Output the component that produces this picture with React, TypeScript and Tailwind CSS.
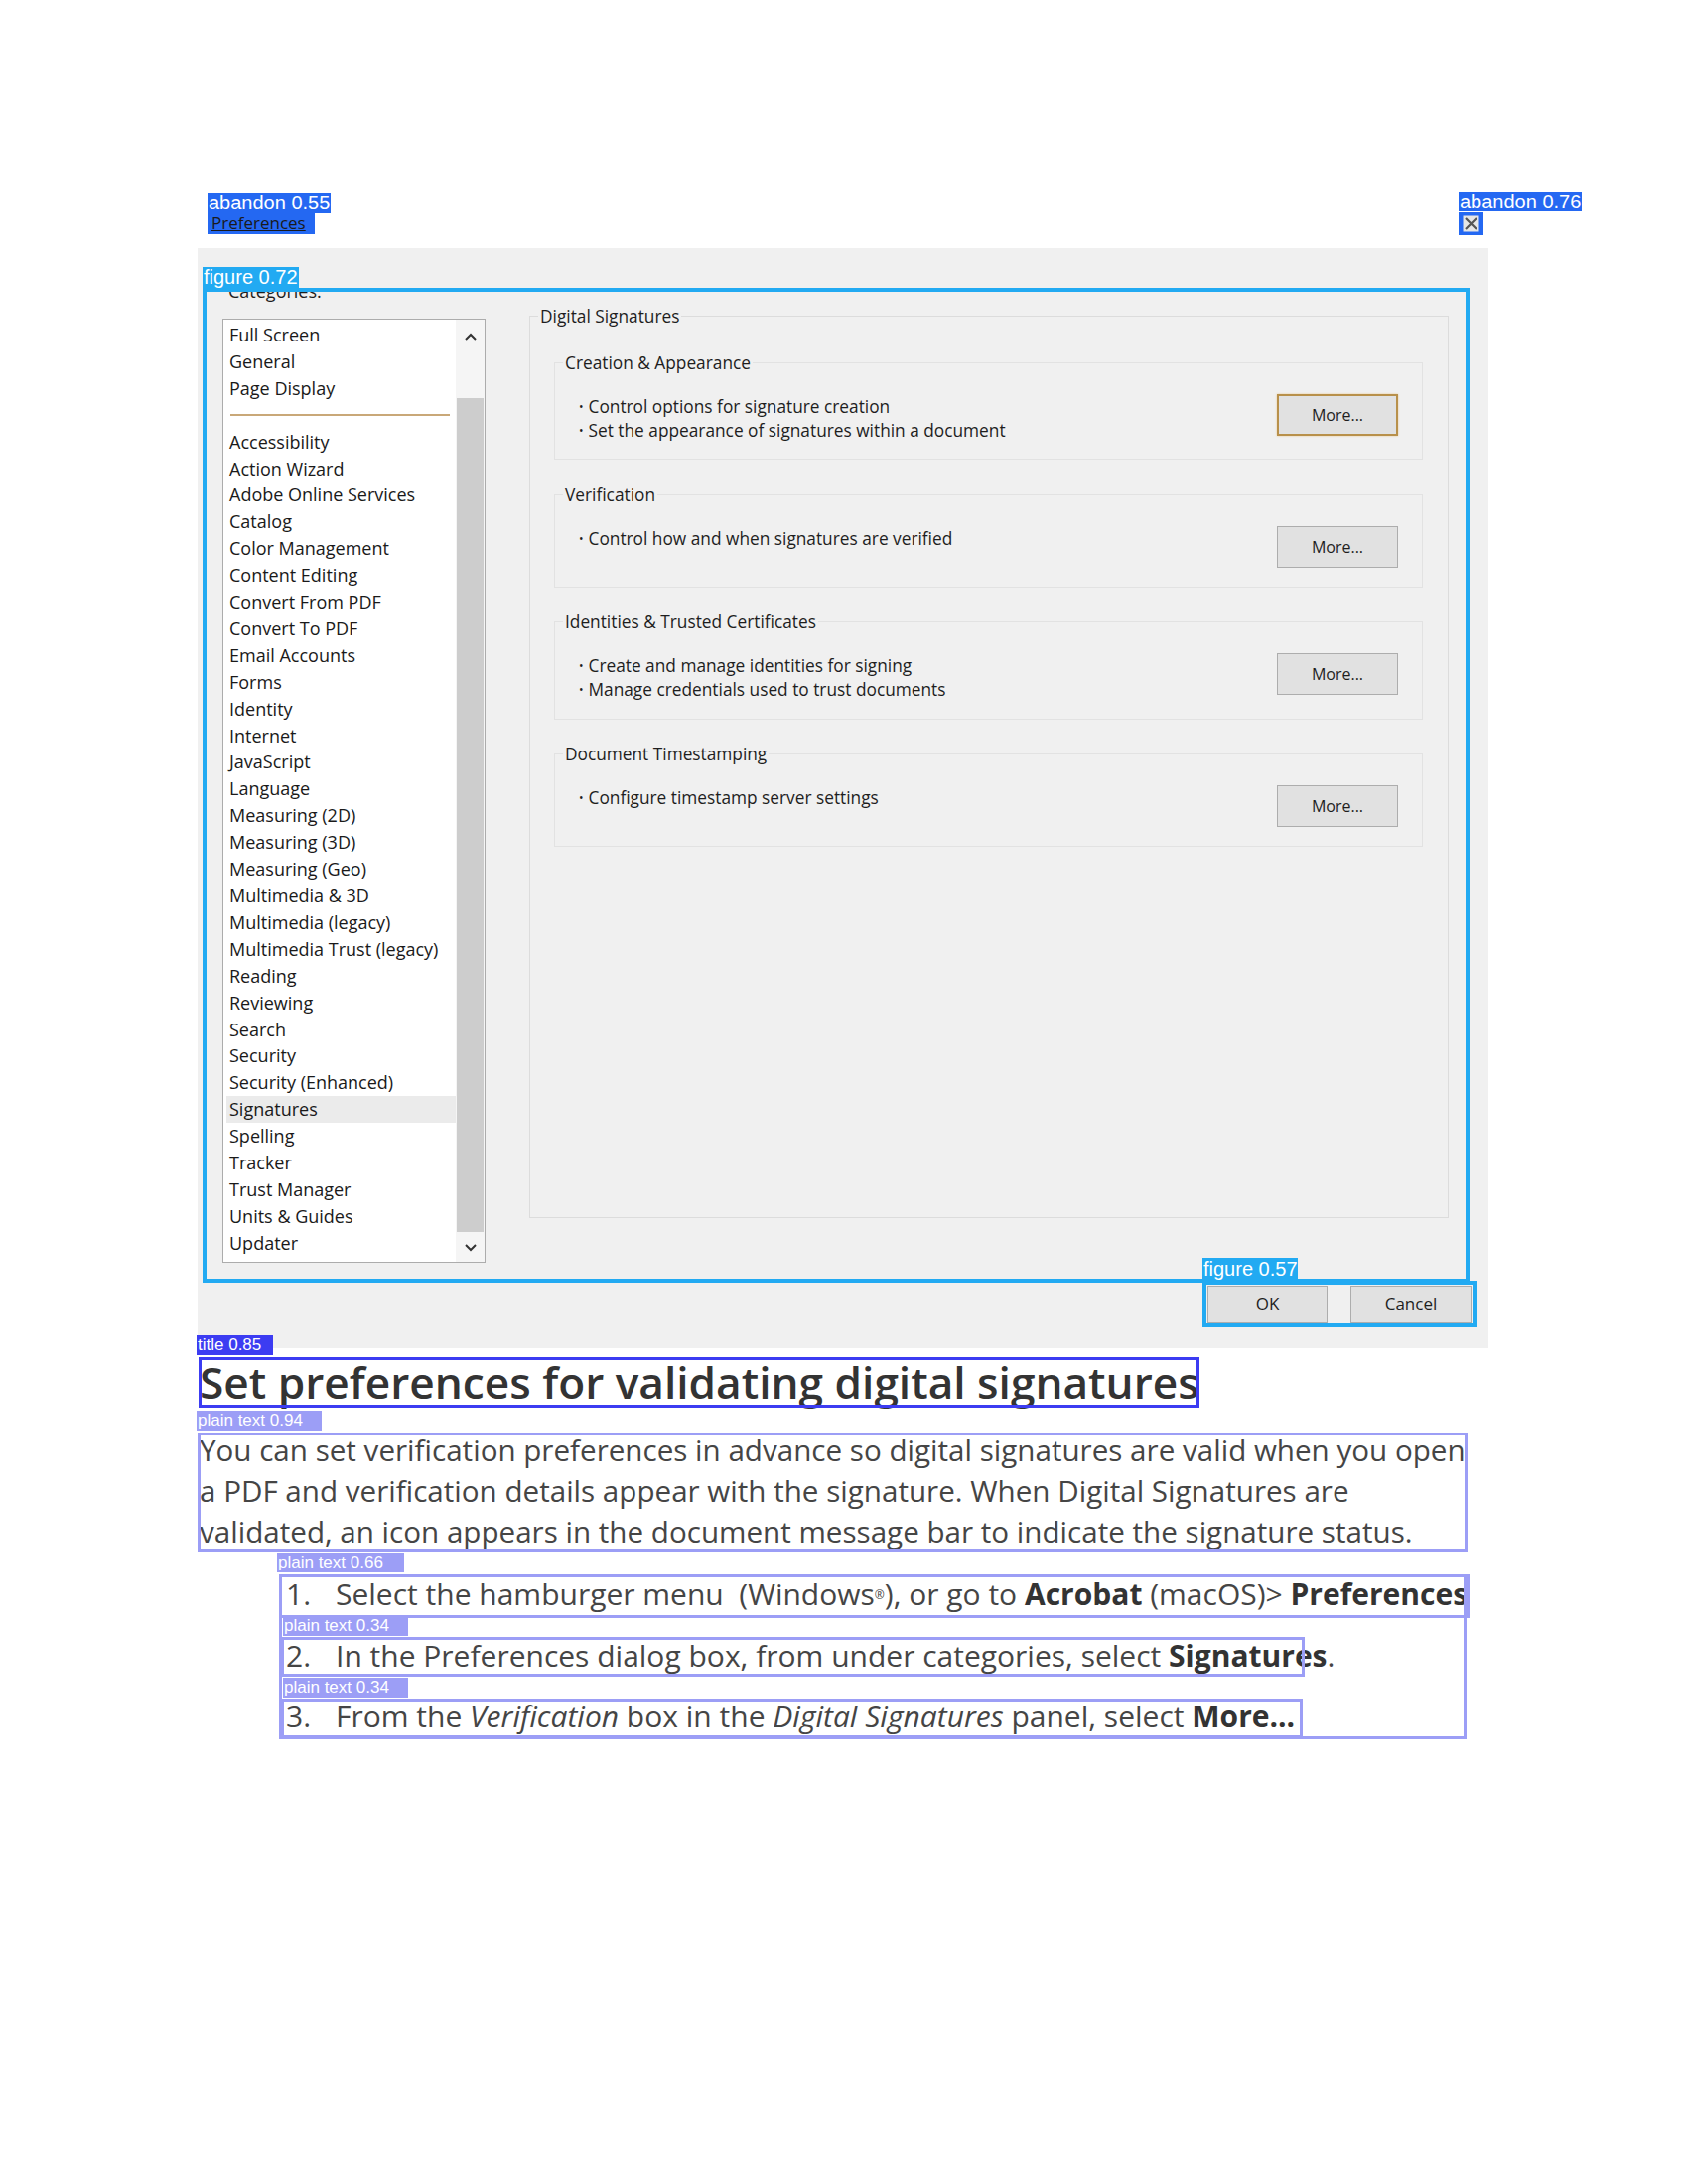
import React from "react";

const topCats = ["Full Screen", "General", "Page Display"];
const cats = [
  "Accessibility",
  "Action Wizard",
  "Adobe Online Services",
  "Catalog",
  "Color Management",
  "Content Editing",
  "Convert From PDF",
  "Convert To PDF",
  "Email Accounts",
  "Forms",
  "Identity",
  "Internet",
  "JavaScript",
  "Language",
  "Measuring (2D)",
  "Measuring (3D)",
  "Measuring (Geo)",
  "Multimedia & 3D",
  "Multimedia (legacy)",
  "Multimedia Trust (legacy)",
  "Reading",
  "Reviewing",
  "Search",
  "Security",
  "Security (Enhanced)",
  "Signatures",
  "Spelling",
  "Tracker",
  "Trust Manager",
  "Units & Guides",
  "Updater",
];

const groups = [
  { title: "Creation & Appearance", lines: ["Control options for signature creation", "Set the appearance of signatures within a document"], h: "h-[98px] mt-[46px]", focus: true },
  { title: "Verification", lines: ["Control how and when signatures are verified"], h: "h-[94px] mt-[35px]", focus: false },
  { title: "Identities & Trusted Certificates", lines: ["Create and manage identities for signing", "Manage credentials used to trust documents"], h: "h-[99px] mt-[34px]", focus: false },
  { title: "Document Timestamping", lines: ["Configure timestamp server settings"], h: "h-[94px] mt-[34px]", focus: false },
];

function Chevron({ down }: { down?: boolean }) {
  return (
    <svg width="14" height="9" viewBox="0 0 14 9">
      <path d={down ? "M2 2 L7 7 L12 2" : "M2 7 L7 2 L12 7"} fill="none" stroke="#333" strokeWidth="2" />
    </svg>
  );
}

function Group({ g }: { g: (typeof groups)[number] }) {
  return (
    <div className={"relative w-[875px] border border-[#e2e2e2] " + g.h}>
      <span className="absolute left-[8px] -top-[12px] bg-[#f0f0f0] px-[2px] leading-[24px] text-[17.3px]">{g.title}</span>
      <div className="flex justify-between pl-[24px] pr-[24px]">
        <div className="pt-[32px] leading-[24px] text-[17.3px]">
          {g.lines.map((l) => (
            <div key={l}>
              <span className="text-[12px] mr-[5px] align-[2px]">•</span>
              {l}
            </div>
          ))}
        </div>
        <button
          className={
            "mt-[31px] w-[122px] h-[42px] bg-[#e1e1e1] text-[16px] text-[#1e1e1e] " +
            (g.focus ? "border-2 border-[#b8904a] shadow-[0_0_2px_#e8c890]" : "border border-[#adadad]")
          }
        >
          More...
        </button>
      </div>
    </div>
  );
}

export default function App() {
  return (
    <div className="relative w-[1700px] h-[2200px] bg-white font-['Open_Sans',sans-serif]">
      <div className="pt-[213px]">
        {/* window title row */}
        <div className="ml-[209px] w-[1285px] h-[24px] flex justify-between items-center">
          <span className="w-[108px] h-[22px] pl-[4px] bg-[#2468f2] text-[17px] leading-[22px] text-[#1a1a1a] underline">Preferences</span>
          <span className="w-[25px] h-[23px] bg-[#2468f2] flex items-center justify-center">
            <svg width="17" height="17" viewBox="0 0 17 17">
              <rect x="0.5" y="0.5" width="16" height="16" fill="#e6e6e6" />
              <path d="M3 3 L14 14 M14 3 L3 14" stroke="#555" strokeWidth="2.2" />
            </svg>
          </span>
        </div>

        {/* dialog */}
        <div className="ml-[199px] mt-[13px] w-[1300px] h-[1108px] bg-[#f0f0f0] flex flex-col pl-[25px] pt-[31px] pr-[17px] text-[#1e1e1e]">
          <div className="flex">
            <div className="w-[265px]">
              <div className="pl-[6px] text-[18px] leading-[24px]">Categories:</div>
              <div className="mt-[16px] h-[951px] border border-[#acacac] bg-white flex">
                <div className="flex-1 pt-[2px] pl-[3px] text-[18px] leading-[26.9px] font-medium text-[#1a1a1a]">
                  {topCats.map((c) => (
                    <div key={c} className="pl-[3px]">{c}</div>
                  ))}
                  <div className="h-[26.9px] flex items-center">
                    <div className="ml-[4px] w-[221px] h-[2px] bg-[#c9a878]" />
                  </div>
                  {cats.map((c) => (
                    <div key={c} className={"pl-[3px] " + (c === "Signatures" ? "bg-[#ebebeb]" : "")}>{c}</div>
                  ))}
                </div>
                <div className="w-[29px] flex flex-col bg-[#f5f5f5]">
                  <div className="h-[34px] flex items-center justify-center">
                    <Chevron />
                  </div>
                  <div className="h-[45px]" />
                  <div className="h-[840px] mx-[1px] bg-[#cdcdcd]" />
                  <div className="flex-1 flex items-center justify-center">
                    <Chevron down />
                  </div>
                </div>
              </div>
            </div>

            <div className="ml-[44px] mt-[37px] relative w-[926px] h-[909px] border border-[#dcdcdc]">
              <span className="absolute left-[8px] -top-[12px] bg-[#f0f0f0] px-[2px] leading-[24px] text-[17.3px]">Digital Signatures</span>
              <div className="pl-[24px] flex flex-col">
                {groups.map((g) => (
                  <Group key={g.title} g={g} />
                ))}
              </div>
            </div>
          </div>

          <div className="flex justify-end gap-[23px] mt-[23px]">
            <button className="w-[121px] h-[38px] bg-[#e1e1e1] border border-[#adadad] text-[17px]">OK</button>
            <button className="w-[122px] h-[38px] bg-[#e1e1e1] border border-[#adadad] text-[17px]">Cancel</button>
          </div>
        </div>

        {/* article text */}
        <h1 className="ml-[201px] mt-[9px] h-[50px] leading-[50px] text-[44.2px] font-semibold text-[#333] whitespace-nowrap">
          Set preferences for validating digital signatures
        </h1>
        <p className="ml-[201px] mt-[23px] text-[29.6px] leading-[41px] text-[#454545] whitespace-nowrap">
          You can set verification preferences in advance so digital signatures are valid when you open
          <br />
          a PDF and verification details appear with the signature. When Digital Signatures are
          <br />
          validated, an icon appears in the document message bar to indicate the signature status.
        </p>
        <div className="ml-[288px] mt-[22px] text-[30px] leading-[41px] text-[#454545] whitespace-nowrap">
          <div className="flex h-[61.5px]">
            <span className="w-[50px]">1.</span>
            <span>
              Select the hamburger menu&nbsp; (Windows<sup className="text-[12px]">®</sup>), or go to <b className="text-[#333]">Acrobat</b> (macOS)&gt; <b className="text-[#333]">Preferences</b>
            </span>
          </div>
          <div className="flex h-[61.5px]">
            <span className="w-[50px]">2.</span>
            <span>
              In the Preferences dialog box, from under categories, select <b className="text-[#333]">Signatures</b>.
            </span>
          </div>
          <div className="flex h-[61.5px]">
            <span className="w-[50px]">3.</span>
            <span>
              From the <i>Verification</i> box in the <i>Digital Signatures</i> panel, select <b className="text-[#333]">More...</b>
            </span>
          </div>
        </div>
      </div>

      {/* detection overlays */}
      <div className="absolute left-[209px] top-[194px] w-[124px] h-[21px] bg-[#2468f2] text-white text-[20px] leading-[21px] font-['Liberation_Sans',sans-serif] pl-[1px]">abandon 0.55</div>
      <div className="absolute left-[1469px] top-[193px] w-[124px] h-[20px] bg-[#2468f2] text-white text-[20px] leading-[20px] font-['Liberation_Sans',sans-serif] pl-[1px]">abandon 0.76</div>

      <div className="absolute left-[204px] top-[290px] w-[1276px] h-[1002px] border-4 border-[#22aaf2]" />
      <div className="absolute left-[204px] top-[269px] w-[97px] h-[21px] bg-[#22aaf2] text-white text-[20px] leading-[21px] font-['Liberation_Sans',sans-serif] pl-[1px]">figure 0.72</div>

      <div className="absolute left-[1211px] top-[1290px] w-[276px] h-[47px] border-4 border-[#22aaf2]" />
      <div className="absolute left-[1211px] top-[1267px] w-[96px] h-[23px] bg-[#22aaf2] text-white text-[20px] leading-[23px] font-['Liberation_Sans',sans-serif] pl-[1px]">figure 0.57</div>

      <div className="absolute left-[200px] top-[1367px] w-[1008px] h-[51px] border-[3px] border-[#3c3cf2]" />
      <div className="absolute left-[198px] top-[1345px] w-[77px] h-[20px] bg-[#3c3cf2] text-white text-[17px] leading-[20px] font-['Liberation_Sans',sans-serif] pl-[1px]">title 0.85</div>

      <div className="absolute left-[199px] top-[1443px] w-[1279px] h-[120px] border-[3px] border-[#9c9ef6]" />
      <div className="absolute left-[198px] top-[1421px] w-[126px] h-[20px] bg-[#9c9ef6] text-white text-[17px] leading-[20px] font-['Liberation_Sans',sans-serif] pl-[1px]">plain text 0.94</div>

      <div className="absolute left-[281px] top-[1586px] w-[1199px] h-[44px] border-[3px] border-[#9c9ef6]" />
      <div className="absolute left-[281px] top-[1586px] w-[1196px] h-[166px] border-[3px] border-[#9c9ef6]" />
      <div className="absolute left-[279px] top-[1564px] w-[128px] h-[20px] bg-[#9c9ef6] text-white text-[17px] leading-[20px] font-['Liberation_Sans',sans-serif] pl-[1px]">plain text 0.66</div>

      <div className="absolute left-[283px] top-[1649px] w-[1031px] h-[40px] border-[3px] border-[#9c9ef6]" />
      <div className="absolute left-[285px] top-[1628px] w-[126px] h-[20px] bg-[#9c9ef6] text-white text-[17px] leading-[20px] font-['Liberation_Sans',sans-serif] pl-[1px]">plain text 0.34</div>

      <div className="absolute left-[283px] top-[1711px] w-[1029px] h-[40px] border-[3px] border-[#9c9ef6]" />
      <div className="absolute left-[285px] top-[1690px] w-[126px] h-[20px] bg-[#9c9ef6] text-white text-[17px] leading-[20px] font-['Liberation_Sans',sans-serif] pl-[1px]">plain text 0.34</div>
    </div>
  );
}
